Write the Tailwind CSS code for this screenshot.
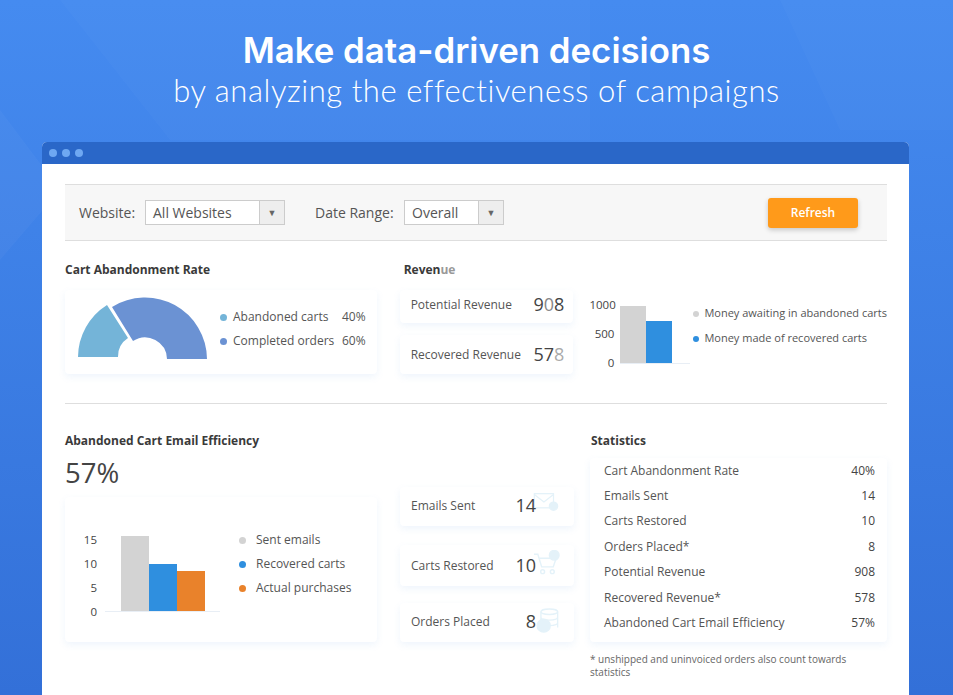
<!DOCTYPE html>
<html lang="en">
<head>
    <meta charset="UTF-8">
    <meta name="viewport" content="width=device-width, initial-scale=1.0">
    <title>Cart Abandonment Dashboard</title>
    <script src="https://cdn.jsdelivr.net/npm/@tailwindcss/browser@4"></script>
</head>
<body class="font-['Open_Sans',sans-serif] text-[#444]">
<div class="relative h-[695px] w-[953px] overflow-hidden bg-gradient-to-b from-[#458bf0] to-[#3370d8]">
    <!-- Background shapes -->
    <svg class="absolute inset-0" width="953" height="695" fill="#fff">
        <polygon points="170,0 590,0 590,140 170,140" opacity="0.025"/>
        <polygon points="0,110 60,190 0,260" opacity="0.03"/>
        <polygon points="60,0 170,0 170,140" opacity="0.02"/>
        <polygon points="780,0 953,0 953,130 840,130" opacity="0.02"/>
    </svg>

    <!-- Headline -->
    <header class="relative h-[142px] pt-[30px] text-center text-white">
        <h1 class="font-['Inter',sans-serif] text-[34.800px] leading-[40px] font-semibold">Make data-driven decisions</h1>
        <p class="mt-[1px] font-['Lato',sans-serif] text-[31px] leading-[38px] font-light tracking-[0.55px]">by analyzing the effectiveness of campaigns</p>
    </header>

    <!-- Window -->
    <div class="relative ml-[42px] h-[553px] w-[867px] rounded-t-[5px] bg-white">
        <div class="flex h-[22px] items-center gap-[5px] rounded-t-[5px] bg-[#2a67c8] pl-[7px]">
            <span class="size-[8px] rounded-full bg-[#6fa8f2]"></span>
            <span class="size-[8px] rounded-full bg-[#6fa8f2]"></span>
            <span class="size-[8px] rounded-full bg-[#6fa8f2]"></span>
        </div>

        <div class="pt-[20px] pr-[22px] pl-[23px]">
            <!-- Filters -->
            <div class="flex h-[57px] items-center border-y border-[#dedede] bg-[#f7f7f7] pl-[14px] text-[14px] text-[#555]">
                <span class="w-[66px]">Website:</span>
                <div class="flex h-[25px] w-[140px] items-center border border-[#ccc] bg-white pl-[7px]">
                    <span class="flex-1">All Websites</span>
                    <span class="flex h-full w-[25px] items-center justify-center border-l border-[#ccc] bg-[#eee] text-[9px] text-[#666]">▼</span>
                </div>
                <span class="ml-[30px] w-[89px]">Date Range:</span>
                <div class="flex h-[25px] w-[100px] items-center border border-[#ccc] bg-white pl-[7px]">
                    <span class="flex-1">Overall</span>
                    <span class="flex h-full w-[25px] items-center justify-center border-l border-[#ccc] bg-[#eee] text-[9px] text-[#666]">▼</span>
                </div>
                <button class="ml-[264px] h-[30px] w-[90px] rounded-[3px] bg-[#ff9a1a] text-[12px] font-semibold text-white shadow-[0_2px_5px_rgba(0,0,0,0.2)]">Refresh</button>
            </div>

            <!-- Top row -->
            <div class="flex h-[163px] border-b border-[#dedede]">
                <section class="w-[312px]">
                    <h2 class="pt-[20px] text-[12px] leading-[18px] font-bold text-[#3a3a3a]">Cart Abandonment Rate</h2>
                    <div class="mt-[11px] flex h-[84px] items-start rounded-[4px] pt-[7px] pl-[13px] shadow-[0_3px_7px_rgba(120,170,230,0.12)]">
                        <svg width="130" height="63" viewBox="78 297 130 63" class="shrink-0">
                            <path d="M78 357 A62 62 0 0 1 107 305 L128 338 A22 22 0 0 0 118 357 Z" fill="#74b4d8"/>
                            <path d="M207 359 A62 62 0 0 0 112 307 L133 341 A22 22 0 0 1 167 359 Z" fill="#6b92d3"/>
                        </svg>
                        <ul class="mt-[8px] ml-[12px] flex-1 pr-[11px] text-[12px] text-[#555]">
                            <li class="flex h-[24px] items-center"><span class="mr-[6px] size-[7px] rounded-full bg-[#74b4d8]"></span><span class="flex-1">Abandoned carts</span><span>40%</span></li>
                            <li class="flex h-[24px] items-center"><span class="mr-[6px] size-[7px] rounded-full bg-[#6b92d3]"></span><span class="flex-1">Completed orders</span><span>60%</span></li>
                        </ul>
                    </div>
                </section>

                <section class="ml-[23px] w-[174px]">
                    <h2 class="pt-[20px] pl-[4px] text-[12px] leading-[18px] font-bold text-[#3a3a3a]">Reven<span class="text-[#999]">ue</span></h2>
                    <div class="mt-[11px] flex h-[33px] items-center justify-between rounded-[4px] pr-[9px] pb-[4px] pl-[11px] shadow-[0_3px_7px_rgba(120,170,230,0.12)]">
                        <span class="text-[12px] text-[#555]">Potential Revenue</span>
                        <span class="text-[18px] text-[#444]">9<span class="text-[#888]">0</span>8</span>
                    </div>
                    <div class="mt-[12px] flex h-[39px] items-center justify-between rounded-[4px] pr-[9px] pl-[11px] shadow-[0_3px_7px_rgba(120,170,230,0.12)]">
                        <span class="text-[12px] text-[#555]">Recovered Revenue</span>
                        <span class="text-[18px] text-[#444]">57<span class="text-[#aaa]">8</span></span>
                    </div>
                </section>

                <section class="ml-[16px] flex flex-1 pt-[57px]">
                    <div class="flex h-[72px] w-[25px] flex-col justify-between text-right text-[11.500px] leading-[14px] text-[#444]">
                        <span>1000</span><span>500</span><span>0</span>
                    </div>
                    <div class="mt-[8px] ml-[6px] flex h-[58px] w-[70px] items-end border-b border-[#e8eef5]">
                        <div class="h-[57px] w-[26px] bg-[#d3d3d3]"></div>
                        <div class="h-[42px] w-[26px] bg-[#2f8fdf]"></div>
                    </div>
                    <ul class="mt-[3px] ml-[3px] text-[11px] text-[#555]">
                        <li class="flex h-[25px] items-center whitespace-nowrap"><span class="mr-[5px] size-[6px] rounded-full bg-[#d3d3d3]"></span>Money awaiting in abandoned carts</li>
                        <li class="flex h-[25px] items-center whitespace-nowrap"><span class="mr-[5px] size-[6px] rounded-full bg-[#2f8fdf]"></span>Money made of recovered carts</li>
                    </ul>
                </section>
            </div>

            <!-- Bottom row -->
            <div class="flex">
                <section class="w-[312px]">
                    <h2 class="pt-[28px] text-[12px] leading-[18px] font-bold text-[#3a3a3a]">Abandoned Cart Email Efficiency</h2>
                    <p class="mt-[7px] text-[27.500px] leading-[32px] text-[#444]">57%</p>
                    <div class="mt-[8px] flex h-[145px] rounded-[4px] pt-[36px] shadow-[0_3px_7px_rgba(120,170,230,0.12)]">
                        <div class="flex h-[86px] w-[32px] flex-col justify-between text-right text-[11.500px] leading-[14px] text-[#444]">
                            <span>15</span><span>10</span><span>5</span><span>0</span>
                        </div>
                        <div class="mt-[3px] ml-[8px] flex h-[76px] w-[115px] items-end border-b border-[#e8eef5] pl-[16px]">
                            <div class="h-[75px] w-[28px] bg-[#d3d3d3]"></div>
                            <div class="h-[47px] w-[28px] bg-[#2f8fdf]"></div>
                            <div class="h-[40px] w-[28px] bg-[#e9822b]"></div>
                        </div>
                        <ul class="mt-[-5px] ml-[19px] text-[12px] text-[#555]">
                            <li class="flex h-[24px] items-center"><span class="mr-[10px] size-[7px] rounded-full bg-[#d3d3d3]"></span>Sent emails</li>
                            <li class="flex h-[24px] items-center"><span class="mr-[10px] size-[7px] rounded-full bg-[#2f8fdf]"></span>Recovered carts</li>
                            <li class="flex h-[24px] items-center"><span class="mr-[10px] size-[7px] rounded-full bg-[#e9822b]"></span>Actual purchases</li>
                        </ul>
                    </div>
                </section>

                <section class="ml-[23px] w-[174px] pt-[83px]">
                    <div class="relative flex h-[39px] items-center justify-between rounded-[4px] pr-[38px] pb-[2px] pl-[11px] shadow-[0_3px_7px_rgba(120,170,230,0.12)]">
                        <span class="text-[12px] text-[#555]">Emails Sent</span>
                        <span class="relative z-10 text-[18px] text-[#444]">14</span>
                        <svg class="absolute top-[5px] right-[14px]" width="28" height="20" viewBox="0 0 30 24" fill="none" stroke="#e4f2f9" stroke-width="1.5">
                            <rect x="1" y="2" width="23" height="17"/><path d="M1 3l11.500 9L24 3"/><circle cx="24" cy="17" r="5" fill="#e4f2f9"/>
                        </svg>
                    </div>
                    <div class="relative mt-[19px] flex h-[41px] items-center justify-between rounded-[4px] pr-[38px] pl-[11px] shadow-[0_3px_7px_rgba(120,170,230,0.12)]">
                        <span class="text-[12px] text-[#555]">Carts Restored</span>
                        <span class="relative z-10 text-[18px] text-[#444]">10</span>
                        <svg class="absolute top-[5px] right-[14px]" width="27" height="26" viewBox="0 0 28 26" fill="none" stroke="#e4f2f9" stroke-width="1.5">
                            <path d="M1 4h4l4 13h12l3-9H7"/><circle cx="10" cy="22" r="2"/><circle cx="20" cy="22" r="2"/><circle cx="22" cy="5" r="5" fill="#e4f2f9"/>
                        </svg>
                    </div>
                    <div class="relative mt-[17px] flex h-[39px] items-center justify-between rounded-[4px] pr-[38px] pb-[2px] pl-[11px] shadow-[0_3px_7px_rgba(120,170,230,0.12)]">
                        <span class="text-[12px] text-[#555]">Orders Placed</span>
                        <span class="relative z-10 text-[18px] text-[#444]">8</span>
                        <svg class="absolute top-[5px] right-[14px]" width="27" height="26" viewBox="0 0 28 28" fill="none" stroke="#e4f2f9" stroke-width="1.5">
                            <ellipse cx="17" cy="4" rx="9" ry="3"/><path d="M8 4v17M26 4v17M8 10c0 4 18 4 18 0M8 16c0 4 18 4 18 0"/><circle cx="11" cy="19" r="7" fill="#e4f2f9"/>
                        </svg>
                    </div>
                </section>

                <section class="ml-[16px] flex-1">
                    <h2 class="pt-[28px] pl-[1px] text-[12px] leading-[18px] font-bold text-[#3a3a3a]">Statistics</h2>
                    <dl class="mt-[8px] h-[184px] rounded-[4px] pr-[12px] pl-[14px] text-[12px] text-[#555] shadow-[0_3px_7px_rgba(120,170,230,0.12)]">
                        <div class="flex h-[25.400px] items-center justify-between"><dt>Cart Abandonment Rate</dt><dd class="font-medium text-[#444]">40%</dd></div>
                        <div class="flex h-[25.400px] items-center justify-between"><dt>Emails Sent</dt><dd class="font-medium text-[#444]">14</dd></div>
                        <div class="flex h-[25.400px] items-center justify-between"><dt>Carts Restored</dt><dd class="font-medium text-[#444]">10</dd></div>
                        <div class="flex h-[25.400px] items-center justify-between"><dt>Orders Placed*</dt><dd class="font-medium text-[#444]">8</dd></div>
                        <div class="flex h-[25.400px] items-center justify-between"><dt>Potential Revenue</dt><dd class="font-medium text-[#444]">908</dd></div>
                        <div class="flex h-[25.400px] items-center justify-between"><dt>Recovered Revenue*</dt><dd class="font-medium text-[#444]">578</dd></div>
                        <div class="flex h-[25.400px] items-center justify-between"><dt>Abandoned Cart Email Efficiency</dt><dd class="font-medium text-[#444]">57%</dd></div>
                    </dl>
                    <p class="mt-[11px] max-w-[270px] text-[10px] leading-[13px] text-[#666]">* unshipped and uninvoiced orders also count towards statistics</p>
                </section>
            </div>
        </div>
    </div>
</div>
</body>
</html>
